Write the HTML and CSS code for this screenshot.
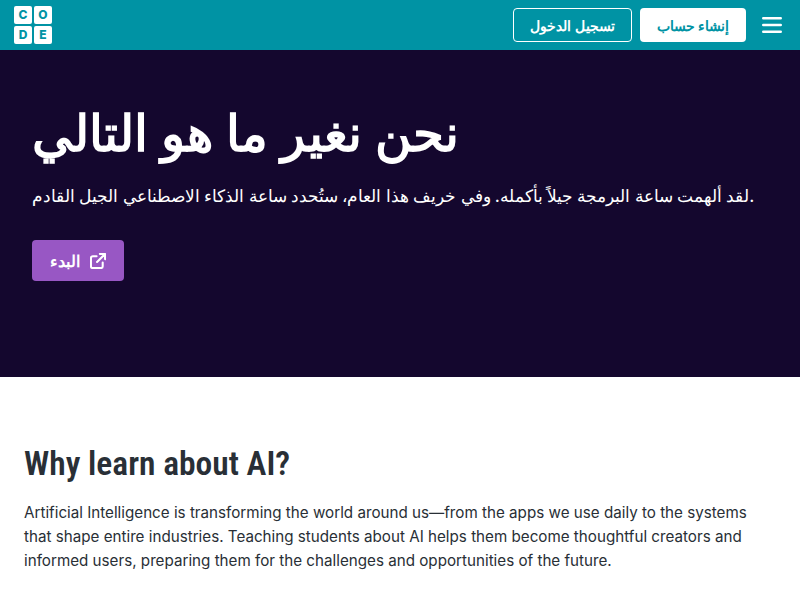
FILE: index.html
```html
<!DOCTYPE html>
<html lang="ar">
<head>
<meta charset="utf-8">
<title>Code.org</title>
<link rel="stylesheet" href="styles.css">
</head>
<body>
<header class="topbar">
  <a class="logo" href="#" aria-label="Code.org">
    <span class="tile">C</span><span class="tile">O</span><span class="tile">D</span><span class="tile">E</span>
  </a>
  <nav class="actions">
    <a class="btn btn-outline" href="#">تسجيل الدخول</a>
    <a class="btn btn-solid" href="#">إنشاء حساب</a>
    <button class="menu" aria-label="menu">
      <svg width="20" height="16" viewBox="0 0 20 16"><path d="M1.300 1.300h17.400M1.300 8h17.400M1.300 14.700h17.400" stroke="#fff" stroke-width="2.600" stroke-linecap="round"/></svg>
    </button>
  </nav>
</header>
<section class="hero">
  <h1 class="hero-title">نحن نغير ما هو التالي</h1>
  <p class="hero-text">لقد ألهمت ساعة البرمجة جيلاً بأكمله. وفي خريف هذا العام، ستُحدد ساعة الذكاء الاصطناعي الجيل القادم.</p>
  <a class="cta" href="#">
    <span>البدء</span>
    <svg width="16" height="16" viewBox="0 0 17 17" fill="none" stroke="#fff" stroke-width="2.200" stroke-linecap="round" stroke-linejoin="round"><path d="M13.500 10v4a2 2 0 0 1-2 2H3a2 2 0 0 1-2-2V5.500a2 2 0 0 1 2-2h4"/><path d="M10.500 1H16v5.500M16 1 7.500 9.500"/></svg>
  </a>
</section>
<section class="about">
  <h2 class="about-title">Why learn about AI?</h2>
  <p class="about-text">Artificial Intelligence is transforming the world around us—from the apps we use daily to the systems that shape entire industries. Teaching students about AI helps them become thoughtful creators and informed users, preparing them for the challenges and opportunities of the future.</p>
</section>
</body>
</html>
```
FILE: styles.css
```css
* { box-sizing: border-box; }
html, body { margin: 0; padding: 0; background: #fff; overflow: hidden; }
body { font-family: "Noto Sans", sans-serif; }
a { text-decoration: none; }

.topbar {
  height: 50px;
  background: #0093a4;
  display: flex;
  align-items: center;
  justify-content: space-between;
  padding: 0 18px 0 14px;
}
.logo {
  display: grid;
  grid-template-columns: 18px 18px;
  grid-auto-rows: 18px;
  gap: 2px;
}
.tile {
  background: #fff;
  border-radius: 2px;
  color: #0093a4;
  font: 800 12px/18px "Inter", sans-serif;
  text-align: center;
}
.actions { display: flex; align-items: center; gap: 8px; }
.btn {
  height: 34px;
  border-radius: 4px;
  display: flex;
  align-items: center;
  justify-content: center;
  font-size: 14px;
  font-weight: 700;
}
.btn-outline { width: 119px; border: 1px solid #fff; color: #fff; }
.btn-solid { width: 106px; background: #fff; color: #0093a4; }
.menu {
  margin-left: 8px;
  padding: 0;
  border: 0;
  background: none;
  display: flex;
}

.hero {
  height: 327px;
  background: #14072e;
  color: #fff;
  padding: 50px 32px 0;
}
.hero-title {
  margin: 0;
  font-size: 50px;
  line-height: 64px;
  font-weight: 800;
}
.hero-text {
  margin: 18px 0 0;
  font-size: 16.900px;
  line-height: 28px;
  font-weight: 500;
  white-space: nowrap;
}
.cta {
  margin-top: 30px;
  width: 92px;
  height: 41px;
  background: #9857c4;
  border-radius: 4px;
  color: #fff;
  display: flex;
  align-items: center;
  justify-content: center;
  gap: 10px;
  font-size: 16px;
  font-weight: 700;
}

.about { padding: 65px 24px 0; color: #292f36; }
.about-title {
  margin: 0;
  font-family: "Roboto", sans-serif;
  font-stretch: 75%;
  font-size: 33.500px;
  line-height: 44px;
  font-weight: 600;
}
.about-text {
  margin: 15px 0 0;
  font-family: "Inter", sans-serif;
  font-size: 15.200px;
  line-height: 24px;
}
```
